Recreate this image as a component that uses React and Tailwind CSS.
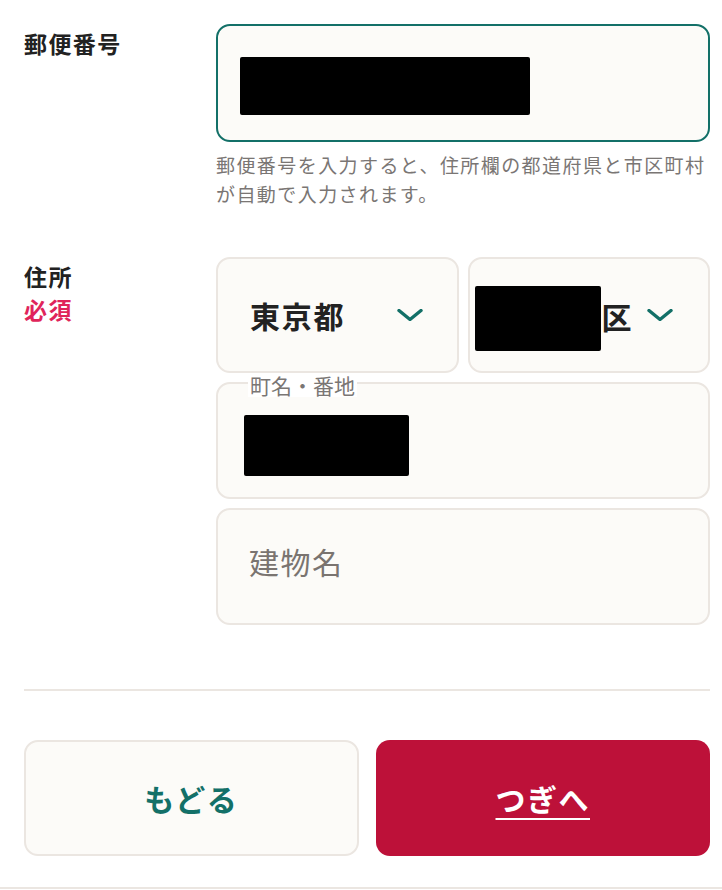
const font = { fontFamily: '"Noto Sans CJK JP", "Noto Sans", sans-serif' }

const Chevron = () => (
  <svg width="26" height="12" viewBox="0 0 26 12" fill="none" className="shrink-0">
    <path d="M2 1.5 L13 10.5 L24 1.5" stroke="#137068" strokeWidth="3.4" strokeLinecap="round" strokeLinejoin="round" />
  </svg>
)

export default function App() {
  return (
    <div className="w-[722px] h-[890px] bg-white overflow-hidden flex flex-col" style={font}>
      <div className="pl-[24px] pr-[12px] pt-[24px] flex-1">
        {/* 郵便番号 */}
        <div className="flex">
          <div className="w-[192px] shrink-0 pt-[3px] text-[23px] leading-[32px] font-bold tracking-[0.06em] text-[#222]">
            郵便番号
          </div>
          <div className="flex-1 min-w-0">
            <div className="h-[118px] rounded-[14px] border-2 border-[#137068] bg-[#fcfbf8] flex items-center pl-[22px]">
              <div className="w-[290px] h-[58px] bg-black rounded-[2px] mt-[6px]" />
            </div>
            <p className="mt-[8px] text-[19px] leading-[29px] tracking-[0.075em] text-[#7a7674]">
              郵便番号を入力すると、住所欄の都道府県と市区町村が自動で入力されます。
            </p>
          </div>
        </div>

        {/* 住所 */}
        <div className="flex mt-[49px]">
          <div className="w-[192px] shrink-0 pt-[3px] text-[23px] leading-[33px] font-bold tracking-[0.06em]">
            <div className="text-[#222]">住所</div>
            <div className="text-[#e0245a]">必須</div>
          </div>
          <div className="flex-1 min-w-0 flex flex-col gap-[9px]">
            <div className="grid grid-cols-2 gap-[9px]">
              <div className="h-[116px] rounded-[14px] border-2 border-[#ebe6e1] bg-[#fcfbf8] flex items-center justify-between pl-[32px] pr-[34px]">
                <span className="text-[30px] font-bold tracking-[0.06em] text-[#222]">東京都</span>
                <Chevron />
              </div>
              <div className="h-[116px] rounded-[14px] border-2 border-[#ebe6e1] bg-[#fcfbf8] flex items-center pl-[5px] pr-[35px]">
                <div className="w-[126px] h-[65px] bg-black rounded-[2px] mt-[6px]" />
                <span className="text-[30px] font-bold text-[#222] ml-[1px] mt-[2px]">区</span>
                <span className="flex-1" />
                <Chevron />
              </div>
            </div>

            <div className="relative h-[117px] rounded-[14px] border-2 border-[#ebe6e1] bg-[#fcfbf8] pl-[26px] pt-[31px]">
              <span className="absolute left-[30px] top-[-11px] bg-white px-[2px] text-[21px] leading-[24px] text-[#7a7674]">
                町名・番地
              </span>
              <div className="w-[165px] h-[61px] bg-black rounded-[2px]" />
            </div>

            <div className="h-[117px] rounded-[14px] border-2 border-[#ebe6e1] bg-[#fcfbf8] flex items-center pl-[31px]">
              <span className="text-[30px] tracking-[0.05em] text-[#7a7470] mt-[-10px]">建物名</span>
            </div>
          </div>
        </div>

        <div className="mt-[64px] h-[2px] bg-[#ebe6e1]" />

        <div className="mt-[49px] grid grid-cols-2 gap-[17px]">
          <button className="h-[116px] rounded-[14px] border-2 border-[#ebe6e1] bg-[#fcfbf8] text-[30px] font-bold tracking-[0.05em] text-[#137068]">
            もどる
          </button>
          <button className="h-[116px] rounded-[14px] bg-[#bd1139] text-[30px] font-bold tracking-[0.05em] text-white">
            <span className="underline underline-offset-[7px] decoration-[2px]">つぎへ</span>
          </button>
        </div>
      </div>
      <div className="h-[2px] bg-[#ebe6e1] mb-[1px]" />
    </div>
  )
}
